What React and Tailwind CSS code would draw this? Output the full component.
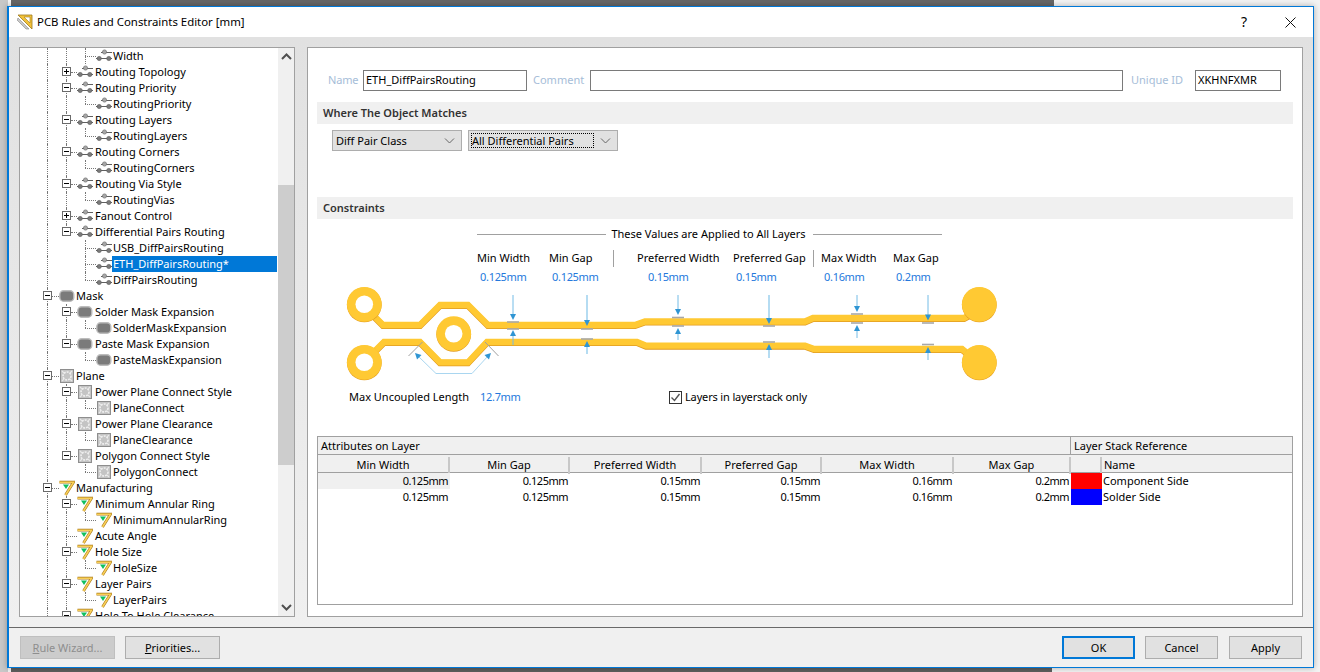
import React from "react";

const rows = [
  { level: 3, label: "Width", icon: "rule" },
  { level: 2, label: "Routing Topology", icon: "rule", box: "plus" },
  { level: 2, label: "Routing Priority", icon: "rule", box: "minus" },
  { level: 3, label: "RoutingPriority", icon: "rule", last: true },
  { level: 2, label: "Routing Layers", icon: "rule", box: "minus" },
  { level: 3, label: "RoutingLayers", icon: "rule", last: true },
  { level: 2, label: "Routing Corners", icon: "rule", box: "minus" },
  { level: 3, label: "RoutingCorners", icon: "rule", last: true },
  { level: 2, label: "Routing Via Style", icon: "rule", box: "minus" },
  { level: 3, label: "RoutingVias", icon: "rule", last: true },
  { level: 2, label: "Fanout Control", icon: "rule", box: "plus" },
  { level: 2, label: "Differential Pairs Routing", icon: "rule", box: "minus", end: true },
  { level: 3, label: "USB_DiffPairsRouting", icon: "rule", noSibling: true },
  { level: 3, label: "ETH_DiffPairsRouting*", icon: "rule", noSibling: true, selected: true },
  { level: 3, label: "DiffPairsRouting", icon: "rule", noSibling: true, last: true },
  { level: 1, label: "Mask", icon: "mask", box: "minus" },
  { level: 2, label: "Solder Mask Expansion", icon: "mask", box: "minus" },
  { level: 3, label: "SolderMaskExpansion", icon: "mask", last: true },
  { level: 2, label: "Paste Mask Expansion", icon: "mask", box: "minus", end: true },
  { level: 3, label: "PasteMaskExpansion", icon: "mask", noSibling: true, last: true },
  { level: 1, label: "Plane", icon: "plane", box: "minus" },
  { level: 2, label: "Power Plane Connect Style", icon: "plane", box: "minus" },
  { level: 3, label: "PlaneConnect", icon: "plane", last: true },
  { level: 2, label: "Power Plane Clearance", icon: "plane", box: "minus" },
  { level: 3, label: "PlaneClearance", icon: "plane", last: true },
  { level: 2, label: "Polygon Connect Style", icon: "plane", box: "minus", end: true },
  { level: 3, label: "PolygonConnect", icon: "plane", noSibling: true, last: true },
  { level: 1, label: "Manufacturing", icon: "mfg", box: "minus" },
  { level: 2, label: "Minimum Annular Ring", icon: "mfg", box: "minus" },
  { level: 3, label: "MinimumAnnularRing", icon: "mfg", last: true },
  { level: 2, label: "Acute Angle", icon: "mfg" },
  { level: 2, label: "Hole Size", icon: "mfg", box: "minus" },
  { level: 3, label: "HoleSize", icon: "mfg", last: true },
  { level: 2, label: "Layer Pairs", icon: "mfg", box: "minus" },
  { level: 3, label: "LayerPairs", icon: "mfg", last: true },
  { level: 2, label: "Hole To Hole Clearance", icon: "mfg", box: "minus" },
];

const attrRows = [
  { values: ["0.125mm", "0.125mm", "0.15mm", "0.15mm", "0.16mm", "0.2mm"], swatch: "bg-[#ff0000]", name: "Component Side" },
  { values: ["0.125mm", "0.125mm", "0.15mm", "0.15mm", "0.16mm", "0.2mm"], swatch: "bg-[#0000ff]", name: "Solder Side" },
];

function TreeIcon({ type }) {
  if (type === "rule") {
    return (
      <svg width="16" height="16" viewBox="0 0 16 16" className="shrink-0">
        <path d="M5 4.5H16M0 10.5H16" stroke="#5f5f5f" strokeWidth="1" fill="none" />
        <circle cx="8.5" cy="4" r="2.1" fill="#a6a6a6" stroke="#707070" strokeWidth="0.7" />
        <circle cx="3.2" cy="10.5" r="2.1" fill="#7a7a7a" stroke="#5f5f5f" strokeWidth="0.7" />
        <circle cx="12.8" cy="10.5" r="2.1" fill="#7a7a7a" stroke="#5f5f5f" strokeWidth="0.7" />
      </svg>
    );
  }
  if (type === "mask") {
    return (
      <svg width="16" height="16" viewBox="0 0 16 16" className="shrink-0">
        <rect x="0.8" y="2.8" width="14" height="10.4" rx="3.8" fill="#7b7b7b" stroke="#bcbcbc" strokeWidth="1.4" />
      </svg>
    );
  }
  if (type === "plane") {
    return (
      <svg width="16" height="16" viewBox="0 0 16 16" className="shrink-0">
        <rect x="1.5" y="1.5" width="13" height="13" fill="#c4c4c4" stroke="#8e8e8e" />
        <circle cx="8" cy="8" r="4" fill="none" stroke="#f0f0f0" strokeWidth="1.6" strokeDasharray="2 1" />
        <path d="M3 3L5 5M13 3L11 5M3 13L5 11M13 13L11 11" stroke="#e8e8e8" strokeWidth="1.2" />
      </svg>
    );
  }
  return (
    <svg width="16" height="16" viewBox="0 0 16 16" className="shrink-0">
      <polyline points="0.5,2.2 14.5,2.2 6.5,15" fill="none" stroke="#a87a1c" strokeWidth="2.8" />
      <polyline points="0.5,2.2 14.5,2.2 6.5,15" fill="none" stroke="#f9cf57" strokeWidth="1.6" />
      <polygon points="4,4.5 10,4.5 7,9" fill="#10c060" />
    </svg>
  );
}

function TreeRow({ row }) {
  const { level, label, icon, box, last, noSibling, end, selected } = row;
  return (
    <div className="relative flex h-4 shrink-0 items-center">
      <span className="absolute left-[27px] top-0 h-4 border-l border-dotted border-[#777]" />
      {level === 2 && (
        <span className={end ? "absolute left-[46px] top-0 h-2 border-l border-dotted border-[#777]" : "absolute left-[46px] top-0 h-4 border-l border-dotted border-[#777]"} />
      )}
      {level === 3 && !noSibling && (
        <span className="absolute left-[46px] top-0 h-4 border-l border-dotted border-[#777]" />
      )}
      {level === 3 && (
        <>
          <span className={last ? "absolute left-[65px] top-0 h-2 border-l border-dotted border-[#777]" : "absolute left-[65px] top-0 h-4 border-l border-dotted border-[#777]"} />
          <span className="absolute left-[65px] top-2 w-[11px] border-t border-dotted border-[#777]" />
        </>
      )}
      {level === 2 && <span className={box ? "absolute left-[51px] top-2 w-[6px] border-t border-dotted border-[#777]" : "absolute left-[46px] top-2 w-[11px] border-t border-dotted border-[#777]"} />}
      {level === 1 && <span className="absolute left-[32px] top-2 w-[7px] border-t border-dotted border-[#777]" />}
      {box && (
        <span className={level === 1 ? "absolute left-[23px] top-[3px] flex h-[9px] w-[9px] items-center justify-center border border-[#6a6a6a] bg-white" : "absolute left-[42px] top-[3px] flex h-[9px] w-[9px] items-center justify-center border border-[#6a6a6a] bg-white"}>
          <svg width="7" height="7" viewBox="0 0 7 7">
            <path d={box === "plus" ? "M1 3.5H6M3.5 1V6" : "M1 3.5H6"} stroke="#000" strokeWidth="1" />
          </svg>
        </span>
      )}
      {level === 1 && <span className="w-[39px] shrink-0" />}
      {level === 2 && <span className="w-[57px] shrink-0" />}
      {level === 3 && <span className="w-[76px] shrink-0" />}
      <TreeIcon type={icon} />
      <span className={level === 2 ? "ml-[2px] whitespace-nowrap" : selected ? "mr-px flex h-4 flex-1 items-center whitespace-nowrap bg-[#0078d7] pl-px text-white" : "ml-px whitespace-nowrap"}>
        {label}
      </span>
    </div>
  );
}

function Chevron({ up }) {
  return (
    <svg width="11" height="7" viewBox="0 0 11 7">
      <path d={up ? "M1 6L5.5 1.5L10 6" : "M1 1L5.5 5.5L10 1"} fill="none" stroke="#505050" strokeWidth="2" />
    </svg>
  );
}

function Tree() {
  return (
    <div className="flex h-[570px] w-[276px] shrink-0 overflow-hidden border border-[#a0a0a0] bg-white">
      <div className="flex h-full w-[258px] shrink-0 flex-col overflow-hidden">
        {rows.map((row) => (
          <TreeRow key={row.label} row={row} />
        ))}
      </div>
      <div className="flex h-full w-4 shrink-0 flex-col bg-[#f0f0f0]">
        <div className="flex h-[17px] shrink-0 items-center justify-center">
          <Chevron up />
        </div>
        <div className="mt-[120px] h-[280px] shrink-0 bg-[#cdcdcd]" />
        <div className="flex-1" />
        <div className="flex h-[17px] shrink-0 items-center justify-center">
          <Chevron />
        </div>
      </div>
    </div>
  );
}

function SelectBox({ widthClass, label, focused }) {
  return (
    <div className={`flex h-[21px] items-center border border-[#adadad] bg-[#e1e1e1] pr-[6px] ${focused ? "pl-[2px]" : "pl-[3px]"} ${widthClass}`}>
      <span className={focused ? "flex h-[15px] flex-1 items-center border border-dotted border-black pt-px" : "flex-1 pt-px"}>{label}</span>
      <svg width="11" height="6" viewBox="0 0 11 6" className={focused ? "ml-[6px]" : ""}>
        <path d="M1 0.5L5.5 5L10 0.5" fill="none" stroke="#666" strokeWidth="1" />
      </svg>
    </div>
  );
}

function SectionHeader({ children }) {
  return (
    <div className="flex h-[22px] items-center bg-[#f0f0f0] pl-[6px] font-semibold text-[#333]">{children}</div>
  );
}

const Trace = ({ points }) => (
  <>
    <polyline points={points} fill="none" stroke="#e19b22" strokeWidth="6.5" transform="translate(0 0.8)" />
    <polyline points={points} fill="none" stroke="#ffc933" strokeWidth="6.3" />
  </>
);

const Pad = ({ x, y, hole }) => (
  <>
    <circle cx={x} cy={y + 0.6} r="17.4" fill="#e19b22" />
    <circle cx={x} cy={y} r="17.4" fill="#ffc933" />
    {hole && <circle cx={x} cy={y} r="8.8" fill="#fff" />}
  </>
);

// x, tick y's and arrow ends, read off the reference
const arrows = [
  { x: 513, topEnd: 320, tick1: 322, tick2: 329, botStart: 345, botEnd: 330, thin: true },
  { x: 587, topEnd: 326, tick1: 329, tick2: 339, botStart: 354, botEnd: 341 },
  { x: 678, topEnd: 315, tick1: 317.5, tick2: 326, botStart: 340, botEnd: 328, thin: true },
  { x: 769, topEnd: 324, tick1: 326, tick2: 342, botStart: 358, botEnd: 344 },
  { x: 857, topEnd: 312, tick1: 314, tick2: 323, botStart: 338, botEnd: 325, thin: true },
  { x: 928, topEnd: 320.5, tick1: 323, tick2: 344.5, botStart: 360, botEnd: 347, thin: true },
];

function TraceDrawing() {
  return (
    <svg width="670" height="100" viewBox="340 285 670 100" className="ml-[23px] block">
      <Trace points="370,312 383,325 420,325 440,305 468,305 488,325 635,325 645,321.5 805,321.5 813,318 964,318 975,312" />
      <Trace points="371,355 384,342 420,342 440,362.3 468,362.3 487,342 637,342 646,345.7 805,345.7 814,349 962,349 972,357" />
      <Pad x={364.3} y={304.3} hole />
      <Pad x={364.3} y={362.3} hole />
      <Pad x={453.7} y={333.7} hole />
      <Pad x={979.3} y={304.3} />
      <Pad x={979.3} y={362.3} />
      {arrows.map((a) => (
        <g key={a.x}>
          <path d={`M${a.x} 295V${a.topEnd - 5}M${a.x} ${a.botStart}V${a.botEnd + 5}`} stroke={a.thin ? "#75bce6" : "#b5dcf2"} strokeWidth={a.thin ? 1 : 2} />
          <polygon points={`${a.x - 3},${a.topEnd - 6} ${a.x + 3},${a.topEnd - 6} ${a.x},${a.topEnd}`} fill="#2f95d3" />
          <polygon points={`${a.x - 3},${a.botEnd + 6} ${a.x + 3},${a.botEnd + 6} ${a.x},${a.botEnd}`} fill="#2f95d3" />
          <rect x={a.x - 6} y={a.tick1 - 0.8} width="12" height="1.6" fill="#a8a8a8" />
          <rect x={a.x - 6} y={a.tick2 - 0.8} width="12" height="1.6" fill="#a8a8a8" />
        </g>
      ))}
      <path d="M408.5 356L422.5 342M498.5 356L485 342" stroke="#a0a0a0" strokeWidth="1" />
      <polyline points="418,356 436,373.5 472,373.5 488,356" fill="none" stroke="#a9d6f0" strokeWidth="1" />
      <polygon points="415,353 421.5,355 417,359.5" fill="#2f95d3" />
      <polygon points="491,353 484.5,355 489,359.5" fill="#2f95d3" />
    </svg>
  );
}

function Constraints() {
  return (
    <div>
      <div className="mt-[7px] flex h-4 items-center pl-[160px]">
        <span className="h-px w-[129px] bg-[#a0a0a0]" />
        <span className="mr-[2px] w-[205px] whitespace-nowrap text-center">These Values are Applied to All Layers</span>
        <span className="h-px w-[129px] bg-[#a0a0a0]" />
      </div>
      <div className="mt-[7px] flex h-[18px] items-center whitespace-nowrap pl-[160px]">
        <span className="w-[72px]">Min Width</span>
        <span className="w-[64px]">Min Gap</span>
        <span className="h-[17px] w-[24px] border-l border-[#a0a0a0]" />
        <span className="w-[96px]">Preferred Width</span>
        <span className="w-[80px]">Preferred Gap</span>
        <span className="h-[17px] w-[8px] border-l border-[#a0a0a0]" />
        <span className="w-[72px]">Max Width</span>
        <span>Max Gap</span>
      </div>
      <div className="mt-[2px] flex h-[16px] items-center whitespace-nowrap pl-[163px] tracking-[-0.3px] text-[#2478dc]">
        <span className="w-[72px]">0.125mm</span>
        <span className="w-[96px]">0.125mm</span>
        <span className="w-[88px]">0.15mm</span>
        <span className="w-[88px]">0.15mm</span>
        <span className="w-[72px]">0.16mm</span>
        <span>0.2mm</span>
      </div>
      <TraceDrawing />
      <div className="mt-[4px] flex h-4 items-center whitespace-nowrap pl-[32px]">
        <span className="w-[131px] pb-px">Max Uncoupled Length</span>
        <span className="w-[189px] tracking-[-0.3px] text-[#2478dc]">12.7mm</span>
        <span className="flex h-[13px] w-[13px] items-center justify-center border border-[#333] bg-white">
          <svg width="11" height="11" viewBox="0 0 11 11">
            <path d="M1.5 5.5L4.5 8.5L9.5 2" fill="none" stroke="#555" strokeWidth="1.4" />
          </svg>
        </span>
        <span className="ml-[3px] tracking-[-0.15px]">Layers in layerstack only</span>
      </div>
    </div>
  );
}

function AttributesTable() {
  const heads = ["Min Width", "Min Gap", "Preferred Width", "Preferred Gap", "Max Width", "Max Gap"];
  return (
    <div className="mt-[31px] h-[169px] border border-[#a0a0a0] bg-white">
      <div className="flex h-[18px] border-b border-[#a0a0a0] bg-[#f0f0f0]">
        <div className="flex w-[753px] items-center border-r border-[#a0a0a0] pl-[3px] pt-px">Attributes on Layer</div>
        <div className="flex flex-1 items-center pl-[3px] pt-px">Layer Stack Reference</div>
      </div>
      <div className="grid h-[18px] grid-cols-[132px_120px_132px_120px_132px_117px_31px_1fr] border-b border-[#a0a0a0] bg-[#f0f0f0]">
        {heads.map((h) => (
          <div key={h} className="my-[2px] flex items-center justify-center border-r-2 border-[#c8c8c8] pb-px">{h}</div>
        ))}
        <div className="my-[2px] border-r-2 border-[#c8c8c8]" />
        <div className="flex items-center pb-px pl-[2px]">Name</div>
      </div>
      {attrRows.map((row, r) => (
        <div key={row.name} className="grid h-4 grid-cols-[132px_120px_132px_120px_132px_117px_31px_1fr]">
          {row.values.map((v, i) => (
            <div key={i} className={r === 0 && i === 0 ? "flex items-center justify-end bg-[#f0f0f0] pr-[2px] tracking-[-0.5px]" : "flex items-center justify-end pr-[2px] tracking-[-0.5px]"}>
              {v}
            </div>
          ))}
          <div className={row.swatch} />
          <div className="flex items-center pl-px">{row.name}</div>
        </div>
      ))}
    </div>
  );
}

function RuleForm() {
  return (
    <div className="flex h-[570px] w-[996px] shrink-0 flex-col border border-[#a0a0a0] bg-white px-[9px] pt-[22px]">
      <div className="flex h-[21px] items-center whitespace-nowrap pl-[11px]">
        <span className="w-[35px] pb-px tracking-[-0.2px] text-[#a6bdd8]">Name</span>
        <div className="flex h-[21px] w-[164px] items-center border border-[#7a7a7a] pb-px pl-[2px]">ETH_DiffPairsRouting</div>
        <span className="ml-[6px] w-[57px] pb-px text-[#a6bdd8]">Comment</span>
        <div className="h-[21px] w-[533px] border border-[#7a7a7a]" />
        <span className="ml-[8px] w-[64px] pb-px text-[#a6bdd8]">Unique ID</span>
        <div className="flex h-[21px] w-[86px] items-center border border-[#7a7a7a] pb-px pl-[2px]">XKHNFXMR</div>
      </div>
      <div className="mt-[11px]">
        <SectionHeader>Where The Object Matches</SectionHeader>
      </div>
      <div className="mt-[6px] flex gap-[6px] pl-[15px]">
        <SelectBox widthClass="w-[130px]" label="Diff Pair Class" />
        <SelectBox widthClass="w-[150px]" label="All Differential Pairs" focused />
      </div>
      <div className="mt-[46px]">
        <SectionHeader>Constraints</SectionHeader>
      </div>
      <Constraints />
      <AttributesTable />
    </div>
  );
}

function Button({ children, widthClass, primary, disabled }) {
  const look = primary
    ? "border-2 border-[#0078d7] bg-[#e1e1e1]"
    : disabled
      ? "border border-[#bfbfbf] bg-[#cccccc] text-[#8e8e8e]"
      : "border border-[#adadad] bg-[#e1e1e1]";
  return <div className={`flex h-[23px] items-center justify-center ${widthClass} ${look}`}>{children}</div>;
}

export default function App() {
  return (
    <div className="flex h-[672px] w-[1320px] flex-col overflow-hidden bg-[linear-gradient(to_right,#c8c8c8_8px,#f3f3f3_8px)] text-[11px] leading-4 text-black [font-family:'Noto_Sans','Liberation_Sans',sans-serif]">
      <div className="ml-[11px] h-[6px] w-[1043px] shrink-0 bg-[#666666]" />
      <div className="relative ml-[7px] flex h-[662px] w-[1307px] shrink-0 flex-col border border-l-2 border-[#0078d7] bg-[#f0f0f0] shadow-[0_0_6px_rgba(0,0,0,0.3)]">
        <div className="flex h-[30px] shrink-0 items-center bg-white">
          <svg width="16" height="16" viewBox="0 0 16 16" className="ml-[8px]">
            <polygon points="1,1 15,1 15,15" fill="#f2c23a" stroke="#9c7a1e" strokeWidth="0.8" />
            <polygon points="7,3 13,3 13,9" fill="#fff" stroke="#9c7a1e" strokeWidth="0.6" />
            <polygon points="1,4 12,15 9,15 0,6" fill="#c9c9c9" stroke="#888" strokeWidth="0.6" />
          </svg>
          <span className="ml-[4px] whitespace-nowrap text-[11.4px]">PCB Rules and Constraints Editor [mm]</span>
          <span className="ml-auto text-[14px]">?</span>
          <svg width="11" height="11" viewBox="0 0 11 11" className="ml-[38px] mr-[17px]">
            <path d="M0.5 0.5L10.5 10.5M10.5 0.5L0.5 10.5" stroke="#111" strokeWidth="1" />
          </svg>
        </div>
        <div className="flex h-[590px] shrink-0 gap-[12px] bg-gradient-to-b from-[#e1e1e1] to-[#f0f0f0] pl-[10px] pt-[10px]">
          <Tree />
          <RuleForm />
        </div>
        <div className="flex h-[40px] shrink-0 items-center border-t border-[#696969] bg-[#f0f0f0] pl-[11px]">
          <Button widthClass="w-[95px]" disabled>
            <span><u>R</u>ule Wizard...</span>
          </Button>
          <div className="ml-[10px]">
            <Button widthClass="w-[95px]">
              <span><u>P</u>riorities...</span>
            </Button>
          </div>
          <div className="ml-auto mr-[11px] flex">
            <Button widthClass="w-[73px]" primary>OK</Button>
            <div className="ml-[10px]">
              <Button widthClass="w-[73px]">Cancel</Button>
            </div>
            <div className="ml-[11px]">
              <Button widthClass="w-[73px]">Apply</Button>
            </div>
          </div>
        </div>
      </div>
      <div className="ml-[11px] h-[4px] w-[1041px] shrink-0 bg-[#5e5e5e]" />
    </div>
  );
}
